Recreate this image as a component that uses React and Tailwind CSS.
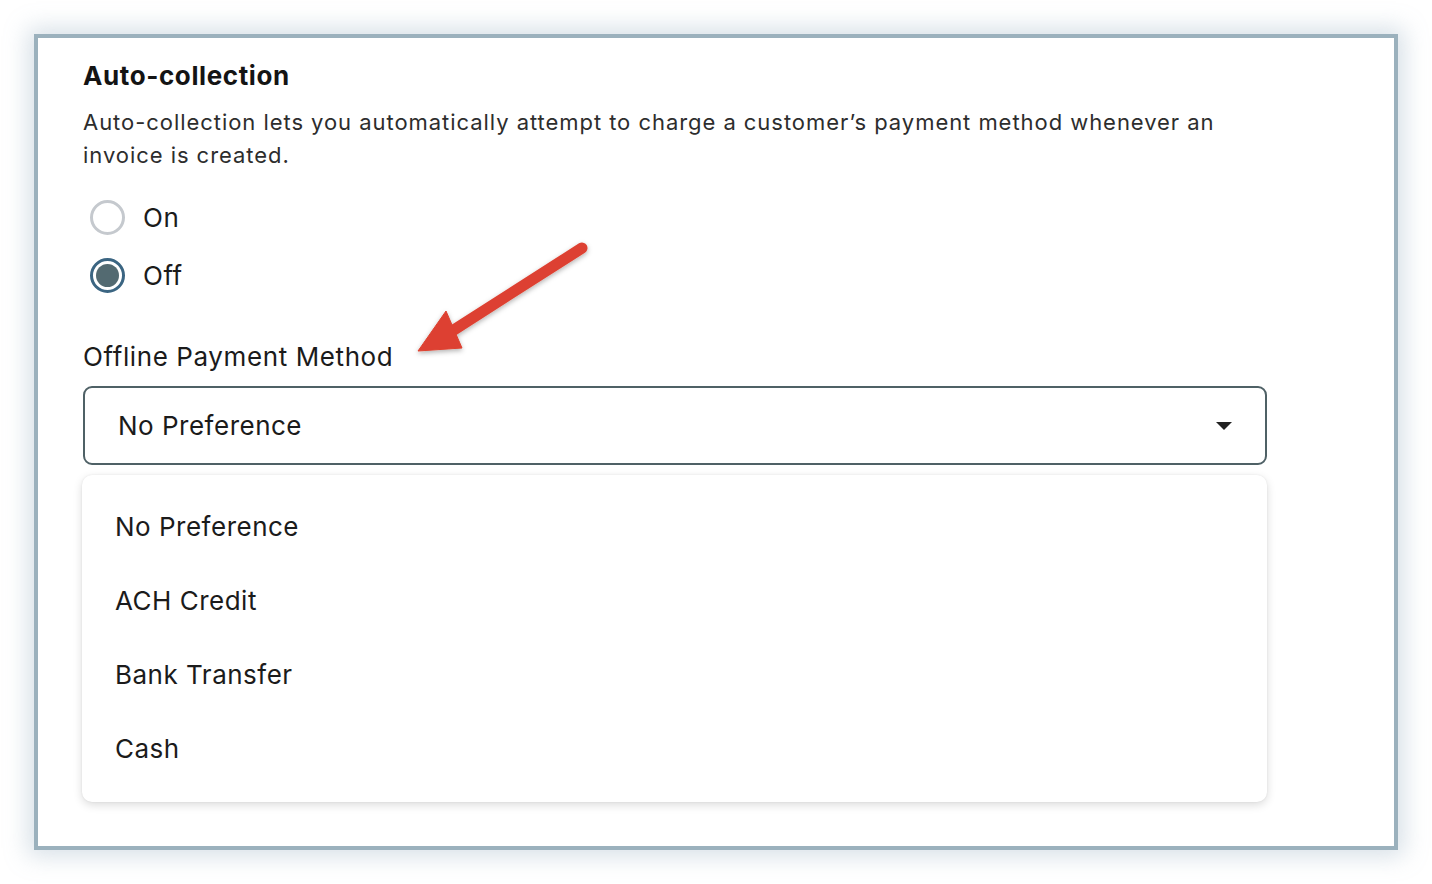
import { useState } from 'react';

const options = ['No Preference', 'ACH Credit', 'Bank Transfer', 'Cash'];

const Radio = ({ checked, label }) => (
  <label className="flex items-center h-[34px]">
    {checked ? (
      <span className="w-[35px] h-[35px] rounded-full border-[3px] border-[#3b6582] flex items-center justify-center ml-[7px]">
        <span className="w-[23px] h-[23px] rounded-full bg-[#536a71]" />
      </span>
    ) : (
      <span className="w-[35px] h-[35px] rounded-full border-[3px] border-[#c5c9ce] ml-[7px]" />
    )}
    <span className="ml-[18px] text-[26px] tracking-[0.5px] text-[#1b1b1b]">{label}</span>
  </label>
);

const Arrow = () => (
  <svg className="absolute left-[372px] top-[198px]" width="190" height="130" viewBox="0 0 190 130">
    <defs>
      <filter id="sh" x="-20%" y="-20%" width="140%" height="140%">
        <feDropShadow dx="0" dy="2" stdDeviation="2.5" floodColor="#000" floodOpacity="0.3" />
      </filter>
    </defs>
    <g filter="url(#sh)" fill="#dd4130" stroke="#dd4130">
      <line x1="172" y1="12" x2="36" y2="99" strokeWidth="11" strokeLinecap="round" />
      <polygon points="8,115 36,75 52,112" strokeWidth="1" />
    </g>
  </svg>
);

export default function App() {
  const [value] = useState('No Preference');
  return (
    <div className="w-[1432px] h-[884px] bg-white pt-[34px] pl-[34px]" style={{ fontFamily: 'Inter, "Noto Sans", sans-serif' }}>
      <div className="relative w-[1364px] h-[816px] border-4 border-[#9bb1bd] bg-white shadow-[0_0_22px_6px_rgba(140,165,185,0.35)] pl-[45px] pt-[18px]">
        <h2 className="text-[26px] font-bold tracking-[0.6px] text-[#141414] leading-[40px]">Auto-collection</h2>
        <p className="mt-[10px] text-[22px] leading-[33px] text-[#2d2d2d] tracking-[0.95px] w-[1160px]">
          Auto-collection lets you automatically attempt to charge a customer’s payment method whenever an invoice is created.
        </p>
        <div className="mt-[28px] flex flex-col gap-[24px]">
          <Radio label="On" />
          <Radio checked label="Off" />
        </div>
        <div className="mt-[48px] text-[26px] tracking-[0.6px] leading-[34px] text-[#1b1b1b]">Offline Payment Method</div>
        <div className="mt-[12px] w-[1184px] h-[79px] border-2 border-[#4f6166] rounded-[9px] flex items-center justify-between pl-[33px] pr-[32px]">
          <span className="text-[26px] tracking-[0.5px] text-[#1b1b1b]">{value}</span>
          <svg width="18" height="10" viewBox="0 0 18 10"><polygon points="1,1 17,1 9,9" fill="#222" /></svg>
        </div>
        <div className="mt-[10px] -ml-[1px] w-[1185px] h-[327px] rounded-[10px] bg-white shadow-[0_3px_10px_rgba(0,0,0,0.14),0_0_2px_rgba(0,0,0,0.08)] pt-[14px] pl-[33px]">
          {options.map((o) => (
            <div key={o} className="h-[74px] flex items-center text-[26px] tracking-[0.5px] text-[#1b1b1b]">{o}</div>
          ))}
        </div>
        <Arrow />
      </div>
    </div>
  );
}
